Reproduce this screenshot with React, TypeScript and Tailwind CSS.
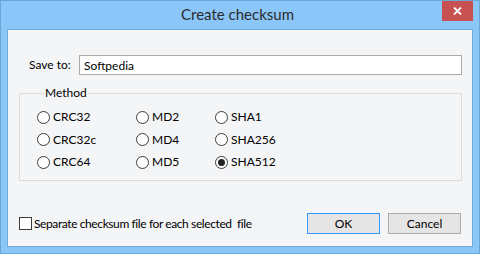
import { useState } from "react"

const methods = [
	["CRC32", "MD2", "SHA1"],
	["CRC32c", "MD4", "SHA256"],
	["CRC64", "MD5", "SHA512"],
]

function Radio({ label, checked, onSelect }: { label: string; checked: boolean; onSelect: () => void }) {
	return (
		<button type="button" onClick={onSelect} className="flex items-center h-[22.5px] text-left">
			<span className="w-[13px] h-[13px] rounded-full border border-[#3c3c3c] bg-white flex items-center justify-center">
				{checked && <span className="w-[7px] h-[7px] rounded-full bg-[#222]" />}
			</span>
			<span className="ml-[3px]">{label}</span>
		</button>
	)
}

export default function App() {
	const [method, setMethod] = useState("SHA512")
	const [separate, setSeparate] = useState(false)

	return (
		<div
			className="w-[480px] h-[254px] bg-[#8bc6f8] border border-[#6ea5d9] flex flex-col text-[12px] text-black"
			style={{ fontFamily: 'Lato, "Segoe UI", sans-serif' }}
		>
			{/* Title bar */}
			<div className="h-[28px] flex items-start shrink-0">
				<div className="flex-1 text-center text-[15px] text-[#2b2b2b] leading-[27px] pl-[32px]">Create checksum</div>
				<button
					type="button"
					className="w-[31px] h-[20px] mr-[6px] bg-[#c75050] flex items-center justify-center"
				>
					<svg width="9" height="8" viewBox="0 0 9 8" fill="none" stroke="white" strokeWidth="1.8">
						<path d="M1 0.5 L8 7.5 M8 0.5 L1 7.5" />
					</svg>
				</button>
			</div>

			{/* Client area */}
			<div className="mx-[6px] mb-[6px] flex-1 bg-[#f4f5f7] border border-[#74aad9] flex flex-col">
				<div className="flex items-center mt-[25px] ml-[21px]">
					<span className="w-[50px]">Save to:</span>
					<input
						value="Softpedia"
						readOnly
						className="w-[383px] h-[20px] border border-[#ababab] bg-white px-[4px] outline-none text-[12px]"
					/>
				</div>

				<fieldset className="mt-[9px] ml-[11px] w-[443px] h-[97px] border border-[#dcdcdc] pl-[17px] pt-[4px]">
					<legend className="ml-[7px] px-[1px]">Method</legend>
					<div className="grid grid-cols-[99px_79px_80px]">
						{methods.flat().map((m) => (
							<Radio key={m} label={m} checked={method === m} onSelect={() => setMethod(m)} />
						))}
					</div>
				</fieldset>

				<div className="flex items-center mt-auto mb-[12px] ml-[11px]">
					<button type="button" onClick={() => setSeparate(!separate)} className="flex items-center flex-1 text-left">
						<span className="w-[13px] h-[13px] border border-[#3c3c3c] bg-white flex items-center justify-center text-[10px] leading-none">
							{separate ? "✓" : ""}
						</span>
						<span className="ml-[2px] whitespace-pre tracking-[-0.4px]">Separate checksum file for each selected  file</span>
					</button>
					<button
						type="button"
						className="w-[73px] h-[21px] border border-[#3399ff] bg-[#e5e5e5] mr-[8px]"
					>
						OK
					</button>
					<button
						type="button"
						className="w-[73px] h-[21px] border border-[#acacac] bg-[#e5e5e5] mr-[11px]"
					>
						Cancel
					</button>
				</div>
			</div>
		</div>
	)
}
